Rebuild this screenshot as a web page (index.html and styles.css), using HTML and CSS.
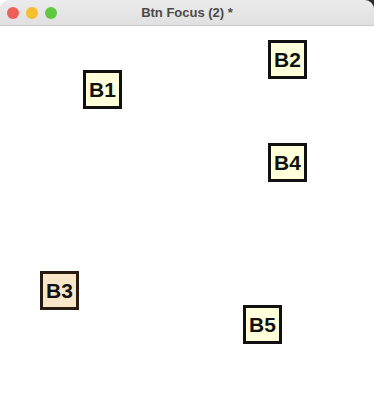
FILE: index.html
```html
<!DOCTYPE html>
<html>
<head>
<meta charset="utf-8">
<link rel="stylesheet" href="styles.css">
</head>
<body>
<div class="window">
  <div class="titlebar">
    <div class="lights">
      <span class="light red"></span>
      <span class="light yellow"></span>
      <span class="light green"></span>
    </div>
    <div class="title">Btn Focus (2) *</div>
  </div>
  <div class="canvas">
    <button class="btn b1">B1</button>
    <button class="btn b2">B2</button>
    <button class="btn b4">B4</button>
    <button class="btn b3 focused">B3</button>
    <button class="btn b5">B5</button>
  </div>
</div>
</body>
</html>
```
FILE: styles.css
```css
html, body {
  margin: 0;
  padding: 0;
  background: #ffffff;
}
.window {
  width: 374px;
  height: 400px;
  background: linear-gradient(to left, #2a2a2a 0, #2a2a2a 10px, #ffffff 10px);
  font-family: "Liberation Sans", Arial, sans-serif;
}
.titlebar {
  height: 25px;
  background: linear-gradient(#ebebeb, #e0e0e0);
  border-bottom: 1px solid #c9c9c9;
  border-top-left-radius: 9px;
  border-top-right-radius: 9px;
  display: flex;
  align-items: center;
  position: relative;
}
.lights {
  display: flex;
  gap: 7px;
  padding-left: 7px;
}
.light {
  width: 12px;
  height: 12px;
  border-radius: 50%;
  display: block;
}
.red { background: #ed5f57; }
.yellow { background: #f4be2f; }
.green { background: #5fc83e; }
.title {
  position: absolute;
  left: 0;
  right: 0;
  text-align: center;
  font-size: 13px;
  font-weight: bold;
  color: #4a4a4a;
}
.canvas {
  position: relative;
  height: 374px;
  background: #ffffff;
}
.btn {
  position: absolute;
  width: 39px;
  height: 39px;
  box-sizing: border-box;
  margin: 0;
  padding: 1px 0 0 0;
  border: 3px solid #111111;
  background: #ffffd9;
  font-family: "Liberation Sans", Arial, sans-serif;
  font-size: 21px;
  font-weight: bold;
  color: #111111;
  display: flex;
  align-items: center;
  justify-content: center;
}
.focused {
  background: #f9e6c9;
  border-color: #2a1b10;
}
.b1 { left: 83px; top: 44px; }
.b2 { left: 268px; top: 14px; }
.b4 { left: 268px; top: 117px; }
.b3 { left: 40px; top: 245px; }
.b5 { left: 243px; top: 279px; }
```
